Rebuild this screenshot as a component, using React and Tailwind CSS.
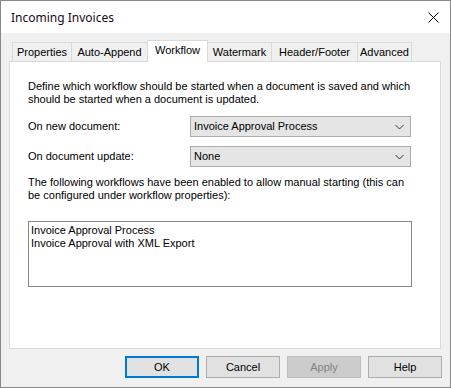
import React from 'react'

const tabs = [
  { label: 'Properties', w: 'w-[60px]' },
  { label: 'Auto-Append', w: 'w-[77px]' },
  { label: 'Workflow', w: 'w-[61px]', active: true },
  { label: 'Watermark', w: 'w-[65px]' },
  { label: 'Header/Footer', w: 'w-[87px]' },
  { label: 'Advanced', w: 'w-[55px]' },
]

function Chevron() {
  return (
    <svg width="9" height="6" viewBox="0 0 9 6" className="shrink-0">
      <path d="M0.5 1 L4.5 5 L8.5 1" fill="none" stroke="#333" strokeWidth="1" />
    </svg>
  )
}

function Select({ value }) {
  return (
    <div className="w-[221px] h-[21px] bg-[#e5e5e5] border border-[#acacac] flex items-center justify-between pl-[3px] pr-[6px]">
      <span>{value}</span>
      <Chevron />
    </div>
  )
}

function Button({ children, primary, disabled }) {
  return (
    <div
      className={`w-[74px] h-[22px] flex items-center justify-center ${
        primary
          ? 'border-2 border-[#0078d7] bg-[#e1e1e1]'
          : disabled
          ? 'border border-[#bfbfbf] bg-[#cccccc] text-[#838383]'
          : 'border border-[#adadad] bg-[#e1e1e1]'
      }`}
    >
      {children}
    </div>
  )
}

export default function App() {
  return (
    <div className="w-[451px] h-[388px] bg-[#f0f0f0] border border-[#888888] flex flex-col text-[11px] text-black font-['Liberation_Sans',sans-serif] leading-[13px]">
      {/* Title bar */}
      <div className="h-[32px] bg-white flex items-center justify-between pl-[10px] pr-[11px] shrink-0">
        <span className="text-[12px] font-['Noto_Sans',sans-serif] text-[#1a0a1a]">Incoming Invoices</span>
        <svg width="11" height="11" viewBox="0 0 11 11">
          <path d="M0.5 0.5 L10.5 10.5 M10.5 0.5 L0.5 10.5" stroke="#000" strokeWidth="1" />
        </svg>
      </div>

      {/* Tabs */}
      <div className="pl-[8px] pt-[7px] flex flex-col">
        <div className="flex items-end ml-[3px] h-[21px] relative z-10">
          {tabs.map((t, i) => (
            <div
              key={t.label}
              className={`${t.w} ${i > 0 ? '-ml-px' : ''} flex justify-center border border-[#d9d9d9] ${
                t.active
                  ? 'h-[22px] bg-white border-b-0 -mb-px items-start pt-[3px] relative z-10'
                  : 'h-[19px] bg-[#f0f0f0] border-b-0 items-center'
              }`}
            >
              {t.label}
            </div>
          ))}
        </div>

        {/* Panel */}
        <div className="w-[432px] h-[288px] bg-white border border-[#d9d9d9] pl-[18px] pt-[18px] flex flex-col">
          <p>
            Define which workflow should be started when a document is saved and which
            <br />
            should be started when a document is updated.
          </p>
          <div className="flex items-center mt-[10px]">
            <span className="w-[162px]">On new document:</span>
            <Select value="Invoice Approval Process" />
          </div>
          <div className="flex items-center mt-[9px]">
            <span className="w-[162px]">On document update:</span>
            <Select value="None" />
          </div>
          <p className="mt-[9px]">
            The following workflows have been enabled to allow manual starting (this can
            <br />
            be configured under workflow properties):
          </p>
          <div className="w-[384px] h-[66px] mt-[19px] border border-[#828790] pl-[2px] pt-[2px]">
            <div>Invoice Approval Process</div>
            <div>Invoice Approval with XML Export</div>
          </div>
        </div>
      </div>

      {/* Buttons */}
      <div className="flex justify-end gap-[7px] pr-[8px] mt-[7px]">
        <Button primary>OK</Button>
        <Button>Cancel</Button>
        <Button disabled>Apply</Button>
        <Button>Help</Button>
      </div>
    </div>
  )
}
